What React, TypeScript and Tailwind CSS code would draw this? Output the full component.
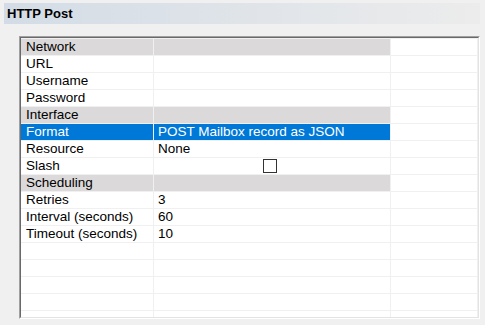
const rows: { label: string; value?: string; group?: boolean; selected?: boolean; check?: boolean }[] = [
  { label: "Network", group: true },
  { label: "URL" },
  { label: "Username" },
  { label: "Password" },
  { label: "Interface", group: true },
  { label: "Format", value: "POST Mailbox record as JSON", selected: true },
  { label: "Resource", value: "None" },
  { label: "Slash", check: true },
  { label: "Scheduling", group: true },
  { label: "Retries", value: "3" },
  { label: "Interval (seconds)", value: "60" },
  { label: "Timeout (seconds)", value: "10" },
  { label: "" },
  { label: "" },
  { label: "" },
  { label: "" },
  { label: "" },
];

function Row({ r }: { r: (typeof rows)[number] }) {
  const bg = r.selected ? "bg-[#0078d7] text-white" : r.group ? "bg-[#dbd9d9] text-black" : "bg-white text-black";
  return (
    <div className="flex h-[17px] shrink-0 border-b border-[#f0f0f0]">
      <div className={`w-[132px] shrink-0 truncate pl-[5px] leading-[16px] ${bg}`}>{r.label}</div>
      <div className={`flex w-[237px] shrink-0 items-center border-l border-[#f0f0f0] pl-[4px] leading-[16px] ${bg}`}>
        {r.check ? <span className="ml-[105px] block h-[14px] w-[14px] border border-[#333333] bg-white" /> : r.value}
      </div>
      <div className="w-[87px] shrink-0 border-l border-[#f0f0f0] bg-white" />
    </div>
  );
}

export default function App() {
  return (
    <div
      className="h-[325px] w-[485px] overflow-hidden bg-[#f0f0f0] px-[4px] pt-[3px] text-[13.5px] text-black"
      style={{ fontFamily: '"Liberation Sans", Arial, sans-serif' }}
    >
      <div className="flex h-[21px] w-[476px] items-center bg-gradient-to-r from-[#d3dce6] to-[#ececec] pl-[3px] text-[13px] font-bold">
        HTTP Post
      </div>
      <div className="ml-[15px] mt-[12px] w-[461px] border-l border-t border-r border-b border-l-[#a0a0a0] border-t-[#a0a0a0] border-r-white border-b-white">
        <div className="flex h-[281px] flex-col overflow-hidden border-l border-t border-r border-b border-l-[#696969] border-t-[#696969] border-r-[#e3e3e3] border-b-[#e3e3e3]">
          <div className="h-[1px] shrink-0 bg-[#f0f0f0]" />
          {rows.map((r, i) => (
            <Row key={i} r={r} />
          ))}
        </div>
      </div>
    </div>
  );
}
